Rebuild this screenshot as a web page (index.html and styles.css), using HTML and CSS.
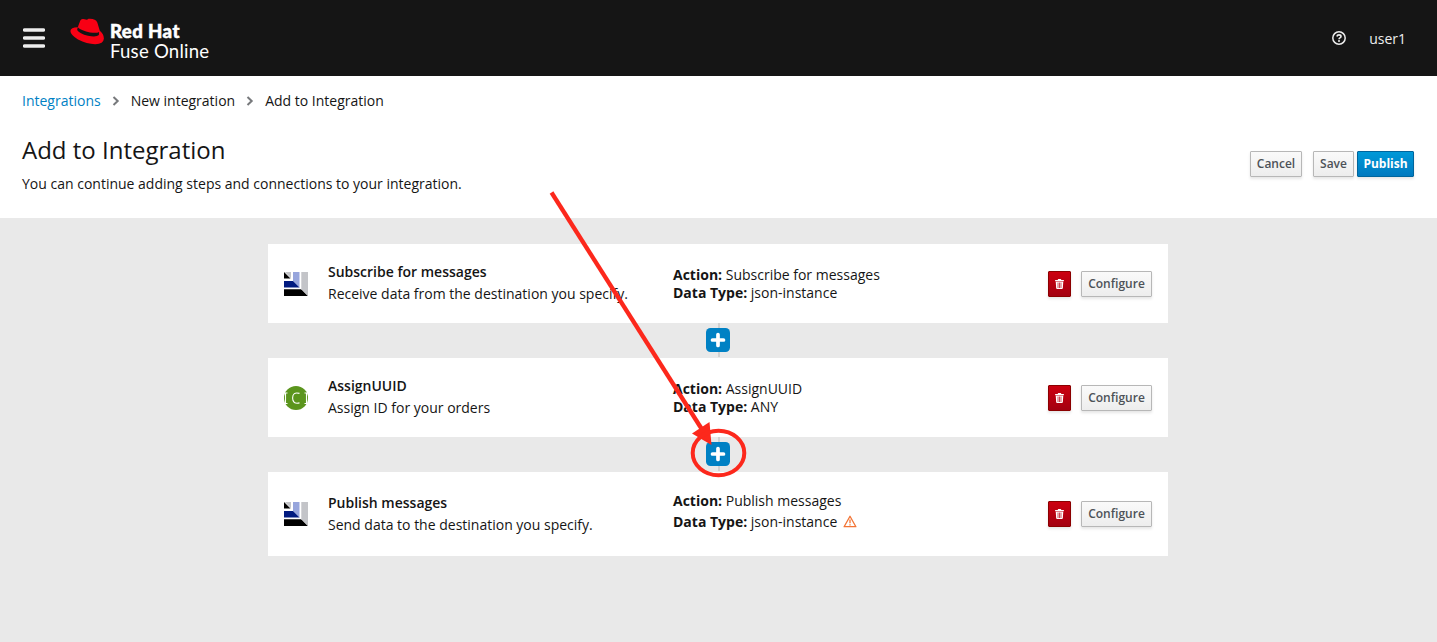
FILE: index.html
```html
<!DOCTYPE html>
<html lang="en">
<head>
<meta charset="utf-8">
<title>Add to Integration</title>
<link rel="stylesheet" href="styles.css">
</head>
<body>
<svg class="symbols" width="0" height="0">
  <symbol id="amq" viewBox="0 0 24 24">
    <path fill="#000" d="M0 0L6.500 6.500H0z"/><path fill="#c3c4c8" d="M1 0H7V6.500z"/>
    <path fill="#001a80" d="M0 9H9.200L15.700 15.500H0z"/><path fill="#97a5dc" d="M9 0H15.500V15.300L9 8.800z"/>
    <path fill="#000" d="M0 17.300H17.300L24 24H0z"/><path fill="#c3c4c8" d="M17.300 0H24V24L17.300 17.300z"/>
  </symbol>
  <symbol id="trash" viewBox="0 0 448 512">
    <path d="M432 48H320l-20-32c-5-10-12-16-24-16H172c-12 0-19 6-24 16l-20 32H16C7 48 0 55 0 64v32c0 9 7 16 16 16h416c9 0 16-7 16-16V64c0-9-7-16-16-16zM32 136l20 331c2 26 22 45 48 45h248c26 0 46-19 48-45l20-331zm98 48h36v272h-36zm76 0h36v272h-36zm76 0h36v272h-36z" fill-rule="evenodd"/>
  </symbol>
  <symbol id="chevron" viewBox="0 0 8 10"><path d="M1.500 1L5.700 5L1.500 9" fill="none" stroke="#77797c" stroke-width="2"/></symbol>
</svg>

<header class="masthead">
  <svg class="menu" viewBox="0 0 22 20"><path d="M1.500 2H20.500M1.500 10H20.500M1.500 18H20.500" stroke="#ededed" stroke-width="3.500" stroke-linecap="round"/></svg>
  <svg class="hat" viewBox="0 0 34 27">
    <path fill="#f80014" d="M7.800 9.300L10.200 2.800Q11 .5 13.300 1L17 1.700L18.500 .8Q25.500 .3 27.300 4.500L29.800 12.800Q33.800 16 33.900 20.500Q33.500 26.300 25 26.200Q17 26 8 21.500Q.5 16.800 .4 13Q.5 9.500 7.800 9.300z"/>
    <path fill="#151515" d="M7.800 9.300L7.100 12Q9.500 15.800 18 17.800Q26.500 19.300 28.900 17.100L29 13.900Q27 15.500 20 14.400Q11.500 12.800 7.800 9.300z"/>
  </svg>
  <div class="brand"><strong>Red Hat</strong><span>Fuse Online</span></div>
  <svg class="help" viewBox="0 0 14 14"><circle cx="7" cy="7" r="6.200" fill="none" stroke="#ededed" stroke-width="1.500"/><path d="M4.900 5.500Q5.200 3.900 7 3.900Q9 3.900 9 5.500Q9 6.300 7.900 6.900Q7.100 7.300 7.100 8.200" fill="none" stroke="#ededed" stroke-width="1.600"/><circle cx="7" cy="10" r="1" fill="#ededed"/></svg>
  <span class="user">user1</span>
</header>

<section class="page-head">
  <nav class="crumbs"><a>Integrations</a><svg><use href="#chevron"/></svg><span>New integration</span><svg><use href="#chevron"/></svg><span>Add to Integration</span></nav>
  <div class="title-row">
    <div class="titles"><h1>Add to Integration</h1><p>You can continue adding steps and connections to your integration.</p></div>
    <div class="actions"><button class="btn cancel">Cancel</button><button class="btn save">Save</button><button class="btn primary">Publish</button></div>
  </div>
</section>

<main class="steps">
  <article class="card">
    <svg class="step-icon"><use href="#amq"/></svg>
    <div class="info"><b>Subscribe for messages</b><span>Receive data from the destination you specify.</span></div>
    <div class="meta"><div><b>Action:</b> Subscribe for messages</div><div><b>Data Type:</b> json-instance</div></div>
    <button class="btn danger" aria-label="Delete"><svg><use href="#trash"/></svg></button><button class="btn configure">Configure</button>
  </article>
  <div class="joint"><svg class="plus" viewBox="0 0 24 24"><rect width="24" height="24" rx="4.500" fill="#0081c4"/><path d="M12 6.500V17.500M6.500 12H17.500" stroke="#fff" stroke-width="3.700" stroke-linecap="round"/></svg></div>
  <article class="card">
    <svg class="step-icon" viewBox="0 0 24 24"><circle cx="12" cy="12" r="12" fill="#5b951d"/><path d="M3.500 7H1.500V17.500H3.500M20.500 7H22.500V17.500H20.500M15.500 7.400Q8.600 5.500 8.600 12.100Q8.600 18.500 15.500 16.900" fill="none" stroke="#fff" stroke-width="1.100"/></svg>
    <div class="info"><b>AssignUUID</b><span>Assign ID for your orders</span></div>
    <div class="meta"><div><b>Action:</b> AssignUUID</div><div><b>Data Type:</b> ANY</div></div>
    <button class="btn danger" aria-label="Delete"><svg><use href="#trash"/></svg></button><button class="btn configure">Configure</button>
  </article>
  <div class="joint"><svg class="plus" viewBox="0 0 24 24"><rect width="24" height="24" rx="4.500" fill="#0081c4"/><path d="M12 6.500V17.500M6.500 12H17.500" stroke="#fff" stroke-width="3.700" stroke-linecap="round"/></svg></div>
  <article class="card last">
    <svg class="step-icon"><use href="#amq"/></svg>
    <div class="info"><b>Publish messages</b><span>Send data to the destination you specify.</span></div>
    <div class="meta"><div><b>Action:</b> Publish messages</div><div><b>Data Type:</b> json-instance <svg class="warn" viewBox="0 0 14 13"><path d="M7 1.300L12.900 11.700H1.100z" fill="none" stroke="#f27435" stroke-width="1.300" stroke-linejoin="round"/><path d="M7 4.500V8.300M7 9.200V10.600" stroke="#f27435" stroke-width="1.300"/></svg></div></div>
    <button class="btn danger" aria-label="Delete"><svg><use href="#trash"/></svg></button><button class="btn configure">Configure</button>
  </article>
</main>

<svg class="callout" viewBox="0 0 1437 642">
  <path d="M551.500 192.500L703 431" stroke="#fc281c" stroke-width="4.300"/>
  <path d="M692 433.500L709.500 422L711.500 445z" fill="#fc281c"/>
  <ellipse cx="718.500" cy="453" rx="25.800" ry="22.200" fill="none" stroke="#fc281c" stroke-width="4"/>
</svg>
</body>
</html>
```
FILE: styles.css
```css
* { box-sizing: border-box; }
body { margin: 0; height: 642px; overflow: hidden; background: #e9e9e9; color: #151515; font: 14px/22px "Open Sans", sans-serif; position: relative; }
svg { display: block; flex: none; }
.symbols { position: absolute; }
.masthead { height: 76px; background: #151515; color: #fff; display: flex; align-items: center; padding: 0 31px 0 23px; }
.menu { width: 22px; height: 20px; }
.hat { width: 34px; height: 27px; margin: -13px 0 0 25px; }
.brand { display: flex; flex-direction: column; margin: 6px auto 0 6px; font: 18.6px/20px Lato, sans-serif; letter-spacing: .22px; }
.brand strong { font-weight: 900; letter-spacing: .4px; -webkit-text-stroke: .5px #fff; }
.help { width: 14px; height: 14px; margin-right: 23px; }
.user { color: #ededed; margin-top: 2px; }
.page-head { height: 142px; background: #fff; padding: 14px 23px 0 22px; }
.crumbs { display: flex; align-items: center; }
.crumbs a { color: #0081c4; }
.crumbs svg { width: 8px; height: 10px; margin: 0 11px 0 11px; }
.title-row { display: flex; justify-content: space-between; }
h1 { margin: 20px 0 0; font-size: 24px; line-height: 36px; font-weight: 400; }
p { margin: 5px 0 0; }
.actions { display: flex; margin-top: 39px; }
.btn { height: 26px; padding: 0; border: 1px solid #b7b7b7; border-radius: 1px; background: linear-gradient(#fafafa, #ededed); color: #4d5258; font: 600 12px/22px "Open Sans", sans-serif; box-shadow: 0 2px 3px rgba(3,3,3,.1); display: flex; align-items: center; justify-content: center; }
.cancel { width: 52px; margin-right: 11px; }
.save { width: 41px; margin-right: 3px; }
.primary { width: 57px; background: linear-gradient(#0099d8, #0079bf); border-color: #00659c; color: #fff; font-weight: 700; }
.steps { width: 900px; margin: 26px 0 0 268px; }
.card { height: 79px; background: #fff; display: flex; align-items: center; padding: 0 16px; }
.card.last { height: 84px; }
.step-icon { width: 24px; height: 24px; margin-right: 20px; }
.info { width: 345px; display: flex; flex-direction: column; margin-top: -2px; }
.last .info { margin-top: 0; }
.info b { font-weight: 600; }
.meta { flex: 1; line-height: 18px; }
.last .meta { line-height: 21px; margin-top: -6px; }
.meta b { font-weight: 700; }
.warn { display: inline-block; width: 14px; height: 13px; margin-left: 2px; vertical-align: -1px; }
.danger { width: 23px; margin-right: 10px; background: linear-gradient(#cc0010, #a30010); border-color: #8b0000; }
.danger svg { width: 9px; height: 10px; fill: #fff; }
.configure { width: 71px; }
.joint { height: 35px; display: flex; align-items: center; justify-content: center; background: linear-gradient(#d1d1d1, #d1d1d1) 450px 0 / 2px 34px no-repeat; }
.plus { width: 24px; height: 24px; margin-top: -1px; }
.callout { position: absolute; left: 0; top: 0; width: 1437px; height: 642px; pointer-events: none; }
```
